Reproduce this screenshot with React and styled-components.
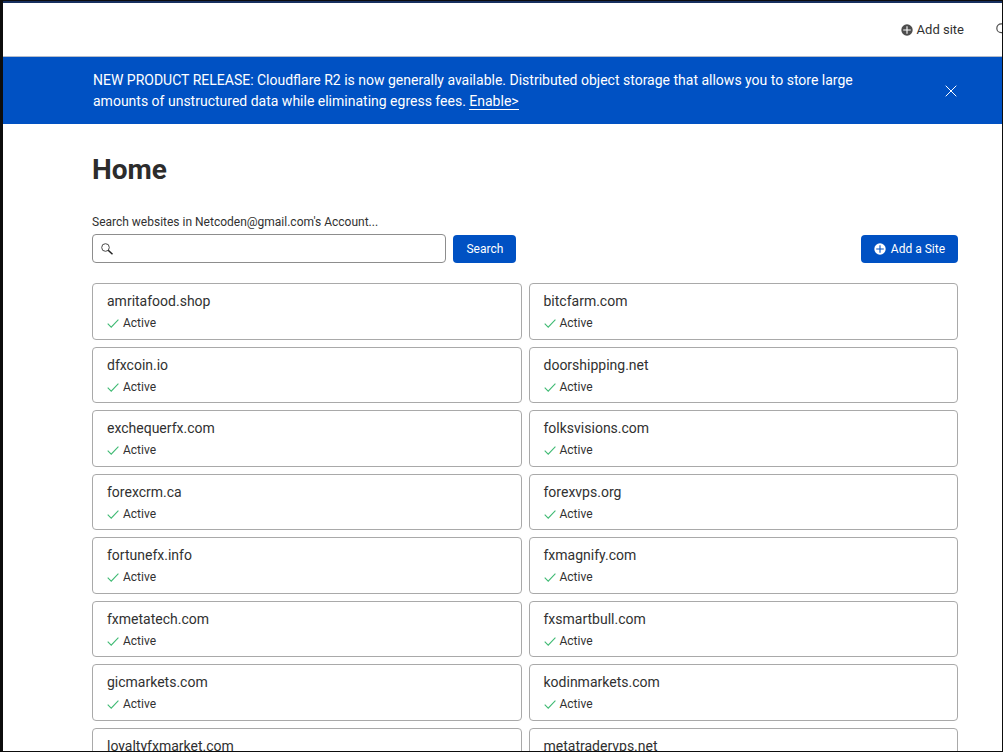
import React, { useState } from "react";
import styled, { createGlobalStyle } from "styled-components";

const sites = [
  "amritafood.shop",
  "bitcfarm.com",
  "dfxcoin.io",
  "doorshipping.net",
  "exchequerfx.com",
  "folksvisions.com",
  "forexcrm.ca",
  "forexvps.org",
  "fortunefx.info",
  "fxmagnify.com",
  "fxmetatech.com",
  "fxsmartbull.com",
  "gicmarkets.com",
  "kodinmarkets.com",
  "loyaltyfxmarket.com",
  "metatradervps.net",
];

const PlusIcon = ({ size, color, cross }) => (
  <svg width={size} height={size} viewBox="0 0 12 12" aria-hidden="true">
    <circle cx="6" cy="6" r="5.7" fill={color} />
    <path d="M6 2.2v7.6M2.2 6h7.6" stroke={cross} strokeWidth="1.1" />
  </svg>
);

const SearchIcon = ({ size }) => (
  <svg width={size} height={size} viewBox="0 0 12 12" fill="none" aria-hidden="true">
    <circle cx="4.5" cy="4.5" r="3.8" stroke="#4a4a4a" />
    <path d="M7.2 7.2l4.3 4.1" stroke="#222" strokeWidth="1.5" />
  </svg>
);

const CheckIcon = () => (
  <svg width="12" height="12" viewBox="0 0 12 12" fill="none" aria-hidden="true">
    <path d="M0.7 6.6l3.5 3.5 7.2-7.4" stroke="#3fba73" strokeWidth="1.1" />
  </svg>
);

const CloseIcon = () => (
  <svg width="12" height="12" viewBox="0 0 12 12" aria-hidden="true">
    <path d="M0.7 0.7l10.6 10.6M11.3 0.7L0.7 11.3" stroke="#fff" />
  </svg>
);

const App = () => {
  const [query, setQuery] = useState("");
  const [showBanner, setShowBanner] = useState(true);

  return (
    <Window>
      <GlobalStyle />
      <Header>
        <HeaderButton type="button">
          <PlusIcon size={12} color="#4d4d4d" cross="#fff" />
          Add site
        </HeaderButton>
        <HeaderButton type="button" aria-label="Search">
          <SearchIcon size={14} />
        </HeaderButton>
      </Header>

      {showBanner && (
        <Banner>
          <BannerText>
            NEW PRODUCT RELEASE: Cloudflare R2 is now generally available.
            Distributed object storage that allows you to store large amounts of
            unstructured data while eliminating egress fees.{" "}
            <a href="#r2">Enable&gt;</a>
          </BannerText>
          <CloseButton
            type="button"
            aria-label="Close"
            onClick={() => setShowBanner(false)}
          >
            <CloseIcon />
          </CloseButton>
        </Banner>
      )}

      <Main>
        <Title>Home</Title>
        <Label htmlFor="search">
          Search websites in Netcoden@gmail.com's Account...
        </Label>
        <Toolbar>
          <SearchForm onSubmit={(e) => e.preventDefault()}>
            <SearchField>
              <SearchIcon size={12} />
              <input
                id="search"
                type="text"
                value={query}
                onChange={(e) => setQuery(e.target.value)}
              />
            </SearchField>
            <Button type="submit">Search</Button>
          </SearchForm>
          <Button type="button">
            <PlusIcon size={12} color="#fff" cross="#0051c3" />
            Add a Site
          </Button>
        </Toolbar>

        <SiteGrid>
          {sites.map((site) => (
            <SiteCard key={site} href={`#${site}`}>
              <SiteName>{site}</SiteName>
              <Status>
                <CheckIcon />
                Active
              </Status>
            </SiteCard>
          ))}
        </SiteGrid>
      </Main>
    </Window>
  );
};

export default App;

const GlobalStyle = createGlobalStyle`
  * {
    box-sizing: border-box;
  }

  body {
    margin: 0;
    background: #fff;
    color: #313131;
    font-family: Roboto, "Noto Sans", sans-serif;
    font-size: 12px;
  }

  button,
  input {
    font: inherit;
    color: inherit;
  }
`;

const Window = styled.div`
  height: 100vh;
  overflow: hidden;
  border: solid #0d0d0d;
  border-width: 1px 1px 1px 3px;
`;

const Header = styled.header`
  display: flex;
  justify-content: flex-end;
  align-items: center;
  gap: 32px;
  height: 56px;
  margin-right: -8px;
  border-top: 2px solid #17305f;
  border-bottom: 1px solid #b4bccb;
`;

const HeaderButton = styled.button`
  display: flex;
  align-items: center;
  gap: 4px;
  padding: 0;
  border: none;
  background: none;
  font-size: 13px;
  cursor: pointer;
`;

const Banner = styled.section`
  display: flex;
  justify-content: space-between;
  align-items: center;
  padding: 13px 45px 12px 90px;
  background: #0051c3;
  color: #fff;
`;

const BannerText = styled.p`
  max-width: 772px;
  margin: 0;
  font-size: 14px;
  line-height: 21px;

  a {
    color: inherit;
    text-decoration: none;
    border-bottom: 1px solid #fff;
  }
`;

const CloseButton = styled.button`
  display: flex;
  padding: 0;
  border: none;
  background: none;
  cursor: pointer;
`;

const Main = styled.main`
  padding: 28px 44px 0 89px;
`;

const Title = styled.h1`
  margin: 0 0 26px;
  font-size: 28px;
  line-height: 36px;
  color: #2c2c2c;
`;

const Label = styled.label`
  display: block;
  margin-bottom: 4px;
  line-height: 16px;
`;

const Toolbar = styled.div`
  display: flex;
  justify-content: space-between;
  align-items: center;
  margin-bottom: 20px;
`;

const SearchForm = styled.form`
  display: flex;
  align-items: center;
  gap: 7px;
  width: 49%;
`;

const SearchField = styled.div`
  display: flex;
  flex: 1;
  align-items: center;
  gap: 8px;
  height: 29px;
  padding: 0 8px;
  border: 1px solid #8d8d8d;
  border-radius: 4px;

  input {
    flex: 1;
    min-width: 0;
    padding: 0;
    border: none;
    outline: none;
    background: none;
  }
`;

const Button = styled.button`
  display: flex;
  align-items: center;
  gap: 5px;
  height: 28px;
  padding: 0 13px;
  border: none;
  border-radius: 4px;
  background: #0051c3;
  color: #fff;
  white-space: nowrap;
  cursor: pointer;
`;

const SiteGrid = styled.div`
  display: grid;
  grid-template-columns: 1fr 1fr;
  grid-auto-rows: 57px 56px;
  gap: 7px;
`;

const SiteCard = styled.a`
  display: flex;
  flex-direction: column;
  gap: 4px;
  padding: 8px 14px;
  border: 1px solid #a9a9a9;
  border-radius: 4px;
  color: inherit;
  text-decoration: none;
`;

const SiteName = styled.span`
  font-size: 14px;
  line-height: 18px;
`;

const Status = styled.span`
  display: flex;
  align-items: center;
  gap: 4px;
  line-height: 18px;
`;
